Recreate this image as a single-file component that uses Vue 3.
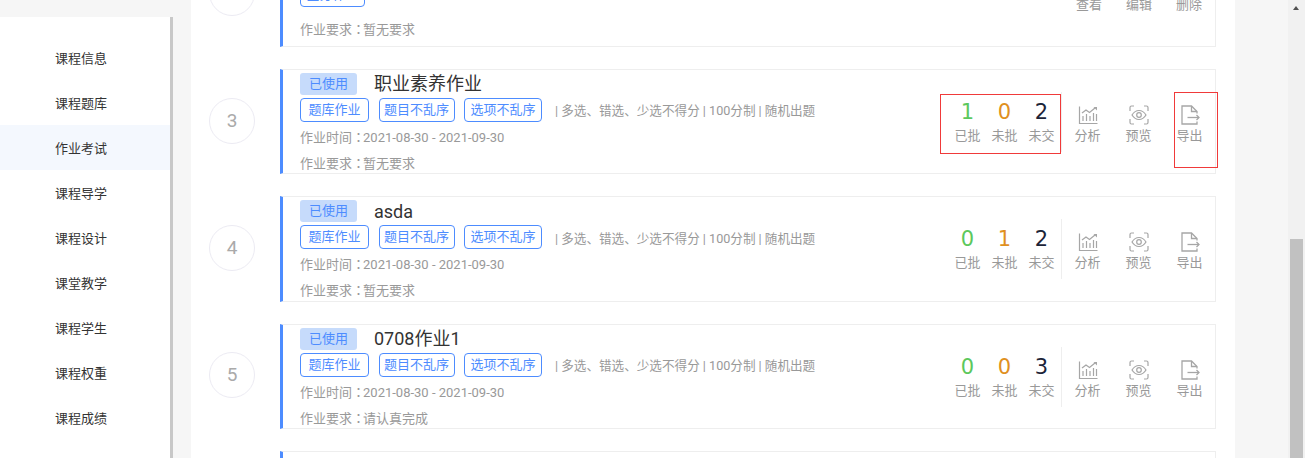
<template>
  <div class="page">
    <aside class="side">
      <ul class="menu">
        <li v-for="m in menu" :key="m" class="menu-item" :class="{ active: m === '作业考试' }">{{ m }}</li>
      </ul>
    </aside>

    <main class="main">
      <div class="list">
        <div v-for="w in works" :key="w.no" class="row">
          <div class="no">{{ w.no }}</div>
          <article class="card" :class="{ compact: w.compact }">
            <div class="info">
              <template v-if="!w.compact">
                <div class="title-line">
                  <span class="used">已使用</span>
                  <h3>{{ w.name }}</h3>
                </div>
                <div class="tags">
                  <span class="tag">题库作业</span>
                  <span class="tag">题目不乱序</span>
                  <span class="tag">选项不乱序</span>
                  <span class="rule">| 多选、错选、少选不得分 | 100分制 | 随机出题</span>
                </div>
                <p class="meta time">作业时间<span class="colon">：</span>2021-08-30 - 2021-09-30</p>
              </template>
              <div v-else class="tags">
                <span class="tag">全分作业</span>
              </div>
              <p class="meta req">作业要求<span class="colon">：</span>{{ w.req }}</p>
            </div>

            <div v-if="w.compact" class="simple-actions">
              <span>查看</span><span>编辑</span><span>删除</span>
            </div>
            <div v-else class="side-box">
              <div class="stats">
                <div class="stat">
                  <b class="green">{{ w.stats[0] }}</b><span>已批</span>
                </div>
                <div class="stat">
                  <b class="orange">{{ w.stats[1] }}</b><span>未批</span>
                </div>
                <div class="stat">
                  <b class="dark">{{ w.stats[2] }}</b><span>未交</span>
                </div>
              </div>
              <div class="actions">
                <div class="action">
                  <svg viewBox="0 0 20 20" width="20" height="20" fill="none" stroke="#a6a6a6" stroke-width="1.2">
                    <path d="M1.500 1.500v17h18" />
                    <path d="M5 16v-5M8.500 16V9M12 16v-5M15.500 16V8M18.500 16V9" />
                    <path d="M4 8l4-3 3.500 2.500L17 3" />
                    <path d="M15.500 2h3.500v3.500z" fill="#a6a6a6" stroke="none" />
                  </svg>
                  <span>分析</span>
                </div>
                <div class="action">
                  <svg viewBox="0 0 20 20" width="20" height="20" fill="none" stroke="#a6a6a6" stroke-width="1.2">
                    <path d="M1 6V2.500A1.500 1.500 0 0 1 2.500 1H5M15 1h2.500A1.500 1.500 0 0 1 19 2.500V6M19 14v3.500A1.500 1.500 0 0 1 17.500 19H15M5 19H2.500A1.500 1.500 0 0 1 1 17.500V14" />
                    <path d="M3 10c2-3.200 4.400-4.500 7-4.500s5 1.300 7 4.500c-2 3.200-4.400 4.500-7 4.500S5 13.200 3 10z" />
                    <circle cx="10" cy="10" r="2.300" />
                  </svg>
                  <span>预览</span>
                </div>
                <div class="action">
                  <svg viewBox="0 0 20 20" width="20" height="20" fill="none" stroke="#a6a6a6" stroke-width="1.300">
                    <path d="M17 8.500V6.500L11.500 1H2v18h15v-2.500" />
                    <path d="M11.500 1v5.500H17" />
                    <path d="M7.500 12.500H19" />
                    <path d="M16.500 10l2.500 2.500-2.500 2.500" />
                  </svg>
                  <span>导出</span>
                </div>
              </div>
            </div>
          </article>
        </div>
      </div>
    </main>

    <div class="scrollbar">
      <span class="arrow"></span>
      <span class="thumb"></span>
    </div>

    <div class="mark mark-stats"></div>
    <div class="mark mark-export"></div>
  </div>
</template>

<script setup>
const menu = [
  "课程信息",
  "课程题库",
  "作业考试",
  "课程导学",
  "课程设计",
  "课堂教学",
  "课程学生",
  "课程权重",
  "课程成绩",
];

const works = [
  { no: 2, compact: true, req: "暂无要求" },
  { no: 3, name: "职业素养作业", stats: [1, 0, 2], req: "暂无要求" },
  { no: 4, name: "asda", stats: [0, 1, 2], req: "暂无要求" },
  { no: 5, name: "0708作业1", stats: [0, 0, 3], req: "请认真完成" },
  { no: 6, compact: true, req: "暂无要求" },
];
</script>

<style>
html,
body {
  margin: 0;
  overflow: hidden;
}
</style>

<style scoped>
.page {
  position: relative;
  display: flex;
  height: 458px;
  overflow: hidden;
  background: #f6f6f6;
  font-family: Roboto, "Noto Sans CJK SC", sans-serif;
  color: #333;
}

.side {
  flex: none;
  box-sizing: border-box;
  width: 173px;
  margin-top: 17px;
  padding-top: 18px;
  background: #fff;
  border-right: 3px solid #c8c8c8;
}

.menu {
  margin: 0;
  padding: 0;
  list-style: none;
}

.menu-item {
  height: 45px;
  line-height: 47px;
  padding-left: 55px;
  font-size: 13px;
  color: #333;
}

.menu-item.active {
  background: #f4f8fe;
}

.main {
  flex: none;
  width: 1044px;
  height: 458px;
  margin-left: 18px;
  background: #fff;
  overflow: hidden;
}

.list {
  display: flex;
  flex-direction: column;
  gap: 22px;
  margin-top: -58.5px;
  padding-left: 89px;
}

.row {
  position: relative;
  width: 936px;
}

.no {
  position: absolute;
  left: -71px;
  top: 28.7px;
  box-sizing: border-box;
  width: 46px;
  height: 46px;
  border: 1px solid #ecebf3;
  border-radius: 50%;
  font-size: 19px;
  line-height: 44px;
  text-align: center;
  color: #aaa;
}

.card {
  display: flex;
  justify-content: space-between;
  box-sizing: border-box;
  height: 105.4px;
  border: 1px solid #eee;
  border-left: 3px solid #4d8cff;
}

.info {
  padding: 3px 0 0 17px;
}

.title-line {
  display: flex;
  align-items: center;
  gap: 17px;
  height: 22px;
}

.used {
  box-sizing: border-box;
  width: 57px;
  height: 22px;
  border-radius: 3px;
  background: #c6dbfb;
  font-size: 13px;
  line-height: 22px;
  text-align: center;
  color: #4d8cff;
}

h3 {
  margin: 0;
  padding-top: 1px;
  font-size: 18px;
  font-weight: 400;
  line-height: 22px;
  color: #333;
}

.tags {
  display: flex;
  align-items: center;
  margin-top: 3px;
}

.tag {
  box-sizing: border-box;
  flex: none;
  width: 76px;
  height: 24px;
  margin-right: 9.5px;
  border: 1px solid #4d8cff;
  border-radius: 4px;
  font-size: 13px;
  line-height: 22px;
  text-align: center;
  color: #4d8cff;
}

.tag:first-child {
  width: 69px;
}

.tag:nth-child(3) {
  width: 78px;
}

.rule {
  margin-left: 3.5px;
  font-size: 12.6px;
  color: #999;
}

.meta {
  margin: 0;
  font-size: 13px;
  line-height: 18px;
  color: #999;
}

.colon {
  margin-right: -2px;
  font-family: "Noto Sans CJK TC", sans-serif;
}

.time {
  margin-top: 6px;
}

.req {
  margin-top: 7px;
}

.compact .info {
  padding-top: 40.5px;
}

.compact .tags {
  margin-top: 0;
}

.compact .tag {
  width: 65px;
}

.compact .req {
  margin-top: 13px;
}

.side-box {
  display: flex;
  align-items: flex-start;
  padding-top: 22px;
}

.stats {
  display: flex;
  height: 60px;
  padding-right: 1px;
  border-right: 1px solid #eee;
}

.stat {
  display: flex;
  flex-direction: column;
  align-items: center;
  width: 37px;
  padding-top: 5px;
}

.stat b {
  height: 30px;
  font-family: "DejaVu Sans", sans-serif;
  font-size: 21px;
  font-weight: 400;
  line-height: 30px;
}

.stat span,
.action span {
  font-size: 13px;
  line-height: 18px;
  color: #999;
}

.green {
  color: #5cc85c;
}

.orange {
  color: #e0901f;
}

.dark {
  color: #1c2438;
}

.actions {
  display: flex;
}

.action {
  display: flex;
  flex-direction: column;
  align-items: center;
  width: 51px;
  padding-top: 13px;
}

.action span {
  margin-top: 2px;
}

.simple-actions {
  display: flex;
  gap: 24px;
  padding-right: 13px;
  margin-top: 51px;
  height: 20px;
  font-size: 13px;
  color: #999;
}

.scrollbar {
  position: absolute;
  top: 0;
  right: 0;
  width: 17px;
  height: 458px;
  background: #f1f1f1;
}

.arrow {
  position: absolute;
  top: 6px;
  left: 5px;
  border-left: 3.5px solid transparent;
  border-right: 3.5px solid transparent;
  border-bottom: 4px solid #505050;
}

.thumb {
  position: absolute;
  top: 239px;
  left: 2px;
  width: 13px;
  height: 219px;
  background: #c1c1c1;
}

.mark {
  position: absolute;
  box-sizing: border-box;
  border: 1px solid #f03a3a;
}

.mark-stats {
  left: 940px;
  top: 94px;
  width: 121px;
  height: 60px;
}

.mark-export {
  left: 1174px;
  top: 92px;
  width: 44px;
  height: 76px;
}
</style>
